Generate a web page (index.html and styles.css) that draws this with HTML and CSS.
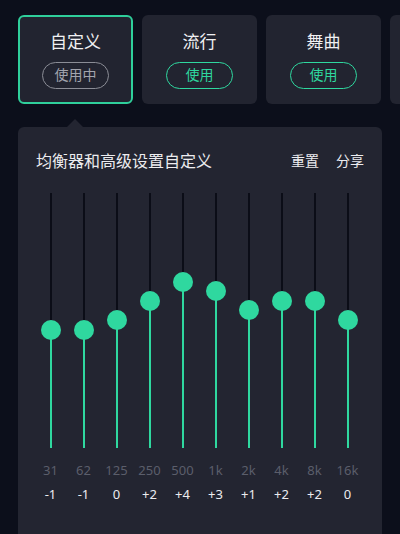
FILE: index.html
```html
<!DOCTYPE html>
<html lang="zh">
<head>
<meta charset="utf-8">
<link rel="stylesheet" href="styles.css">
</head>
<body>
<div class="presets">
  <div class="card active">
    <div class="card-title">自定义</div>
    <div class="pill pill-using">使用中</div>
  </div>
  <div class="card">
    <div class="card-title">流行</div>
    <div class="pill">使用</div>
  </div>
  <div class="card">
    <div class="card-title">舞曲</div>
    <div class="pill">使用</div>
  </div>
  <div class="card"></div>
</div>
<div class="panel">
  <div class="pointer"></div>
  <div class="panel-head">
    <div class="panel-title">均衡器和高级设置自定义</div>
    <div class="actions"><span>重置</span><span>分享</span></div>
  </div>
  <div class="bands">
    <div class="band"><div class="track"><div class="fill" style="height:118px"></div><div class="knob" style="top:137px"></div></div><div class="freq">31</div><div class="val">-1</div></div>
    <div class="band"><div class="track"><div class="fill" style="height:118px"></div><div class="knob" style="top:137px"></div></div><div class="freq">62</div><div class="val">-1</div></div>
    <div class="band"><div class="track"><div class="fill" style="height:128px"></div><div class="knob" style="top:127px"></div></div><div class="freq">125</div><div class="val">0</div></div>
    <div class="band"><div class="track"><div class="fill" style="height:147px"></div><div class="knob" style="top:108px"></div></div><div class="freq">250</div><div class="val">+2</div></div>
    <div class="band"><div class="track"><div class="fill" style="height:166px"></div><div class="knob" style="top:89px"></div></div><div class="freq">500</div><div class="val">+4</div></div>
    <div class="band"><div class="track"><div class="fill" style="height:157px"></div><div class="knob" style="top:98px"></div></div><div class="freq">1k</div><div class="val">+3</div></div>
    <div class="band"><div class="track"><div class="fill" style="height:138px"></div><div class="knob" style="top:117px"></div></div><div class="freq">2k</div><div class="val">+1</div></div>
    <div class="band"><div class="track"><div class="fill" style="height:147px"></div><div class="knob" style="top:108px"></div></div><div class="freq">4k</div><div class="val">+2</div></div>
    <div class="band"><div class="track"><div class="fill" style="height:147px"></div><div class="knob" style="top:108px"></div></div><div class="freq">8k</div><div class="val">+2</div></div>
    <div class="band"><div class="track"><div class="fill" style="height:128px"></div><div class="knob" style="top:127px"></div></div><div class="freq">16k</div><div class="val">0</div></div>
  </div>
</div>
</body>
</html>
```

FILE: styles.css
```css
* { box-sizing: border-box; }
html, body { margin: 0; padding: 0; }
body {
  width: 400px;
  height: 534px;
  overflow: hidden;
  background: #0c0f1b;
  font-family: "Noto Sans", "Noto Sans CJK SC", sans-serif;
  color: #ececef;
}
.presets {
  display: flex;
  gap: 9px;
  padding: 15px 0 0 18px;
  overflow: hidden;
}
.card {
  flex: 0 0 115px;
  height: 89px;
  border: 2px solid transparent;
  border-radius: 6px;
  background: #222430;
  display: flex;
  flex-direction: column;
  align-items: center;
  padding-top: 14px;
}
.card.active { border-color: #2fcf9b; }
.card-title {
  font-size: 17px;
  line-height: 22px;
  color: #f0f0f2;
}
.pill {
  margin-top: 9px;
  width: 67px;
  height: 27px;
  border: 1.5px solid #2fd89f;
  border-radius: 14px;
  color: #2fd89f;
  font-size: 14px;
  line-height: 24px;
  text-align: center;
}
.pill-using {
  border-color: #8b8d96;
  color: #a3a5ae;
}
.panel {
  position: relative;
  margin: 23px 0 0 18px;
  width: 364px;
  height: 420px;
  background: #232531;
  border-radius: 6px 6px 0 0;
  padding: 21px 18px 0 18px;
}
.pointer {
  position: absolute;
  top: -8px;
  left: 49px;
  width: 0;
  height: 0;
  border-left: 8px solid transparent;
  border-right: 8px solid transparent;
  border-bottom: 8px solid #232531;
}
.panel-head {
  display: flex;
  justify-content: space-between;
  align-items: center;
  height: 24px;
}
.panel-title {
  font-size: 16px;
  color: #ececef;
}
.actions {
  display: flex;
  gap: 17px;
  font-size: 14px;
  color: #ececef;
}
.bands {
  display: grid;
  grid-template-columns: repeat(10, 33px);
  margin: 21px 0 0 -2px;
}
.band {
  display: flex;
  flex-direction: column;
  align-items: center;
}
.track {
  position: relative;
  width: 2px;
  height: 255px;
  background: #0b0d17;
}
.fill {
  position: absolute;
  left: 0;
  bottom: 0;
  width: 2px;
  background: #2fd89f;
}
.knob {
  position: absolute;
  left: -9px;
  width: 20px;
  height: 20px;
  margin-top: -10px;
  border-radius: 50%;
  background: #2fd89f;
}
.freq {
  margin-top: 13px;
  font-size: 13px;
  line-height: 18px;
  color: #5b5e6b;
}
.val {
  margin-top: 6px;
  font-size: 13px;
  line-height: 18px;
  color: #ececef;
}
```
